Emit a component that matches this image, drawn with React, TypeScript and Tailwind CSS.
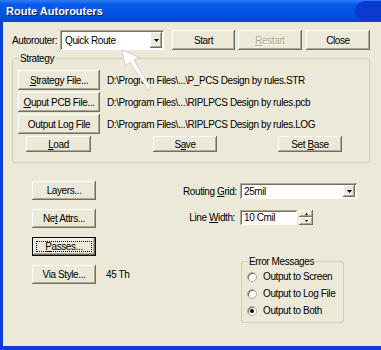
import { ReactNode } from "react";

// classic 3d button
const Btn = ({
  children,
  className = "",
  disabled = false,
  focused = false,
}: {
  children: ReactNode;
  className?: string;
  disabled?: boolean;
  focused?: boolean;
}) => (
  <div
    className={`flex items-center justify-center bg-[#ece9d8] ${
      focused
        ? "border border-black shadow-[inset_-1px_-1px_#716f64,inset_1px_1px_#fff,inset_-2px_-2px_#aca899]"
        : "shadow-[inset_-1px_-1px_#716f64,inset_1px_1px_#fff,inset_-2px_-2px_#aca899]"
    } ${disabled ? "text-[#aca899] [text-shadow:1px_1px_#fff]" : "text-black"} ${className}`}
  >
    {focused ? (
      <span className="flex items-center justify-center w-[calc(100%-6px)] h-[calc(100%-6px)] border border-dotted border-black">
        {children}
      </span>
    ) : (
      children
    )}
  </div>
);

const Sunken = ({ children, className = "" }: { children?: ReactNode; className?: string }) => (
  <div
    className={`flex items-center bg-white shadow-[inset_1px_1px_#aca899,inset_-1px_-1px_#fff,inset_2px_2px_#716f64] ${className}`}
  >
    {children}
  </div>
);

const Arrow = () => (
  <div className="w-[12px] h-[calc(100%-4px)] mr-[2px] flex items-center justify-center bg-[#ece9d8] shadow-[inset_-1px_-1px_#716f64,inset_1px_1px_#fff,inset_-2px_-2px_#aca899]">
    <svg width="5" height="3" viewBox="0 0 5 3">
      <path d="M0 0h5L2.5 3z" fill="#000" />
    </svg>
  </div>
);

const Radio = ({ label, checked = false }: { label: string; checked?: boolean }) => (
  <div className="flex items-center h-[17px]">
    <span className="w-[10px] h-[10px] rounded-full bg-white border border-[#aca899] shadow-[inset_1px_1px_#716f64] flex items-center justify-center">
      {checked && <span className="w-[4px] h-[4px] rounded-full bg-black" />}
    </span>
    <span className="ml-[6px]">{label}</span>
  </div>
);

const paths = [
  { btn: <><u>S</u>trategy File...</>, path: "D:\\Program Files\\...\\P_PCS Design by rules.STR" },
  { btn: <><u>O</u>uput PCB File...</>, path: "D:\\Program Files\\...\\RIPLPCS Design by rules.pcb" },
  { btn: <>Output Log File</>, path: "D:\\Program Files\\...\\RIPLPCS Design by rules.LOG" },
];

export default function App() {
  return (
    <div className="w-[381px] h-[350px] flex flex-col bg-[#0a3fd4] font-['Liberation_Sans',Arial,sans-serif] text-[10px] tracking-[-0.4px] text-black overflow-hidden">
      {/* title bar */}
      <div className="h-[22px] flex items-center bg-[linear-gradient(to_bottom,#2f7cf7,#0a5ce8_20%,#0054e3_60%,#0048d0)]">
        <span className="ml-[6px] text-white font-bold text-[11px] tracking-normal [text-shadow:1px_1px_#0a1d6e]">
          Route Autorouters
        </span>
        <div className="ml-auto w-[26px] h-[20px] rounded-l-[10px] bg-[#0a3ad0]" />
      </div>

      {/* body */}
      <div className="relative flex-1 ml-[3px] mb-[4px] bg-[#ece9d8] flex flex-col">
        {/* autorouter row */}
        <div className="flex items-center mt-[8px] ml-[9px] h-[20px]">
          <span className="w-[48px]">Autorouter:</span>
          <Sunken className="w-[104px] h-[20px] justify-between">
            <span className="ml-[5px]">Quick Route</span>
            <Arrow />
          </Sunken>
          <Btn className="ml-[8px] w-[63px] h-[20px]">Start</Btn>
          <Btn className="ml-[3px] w-[64px] h-[20px]" disabled>
            <span><u>R</u>estart</span>
          </Btn>
          <Btn className="ml-[4px] w-[64px] h-[20px]">Close</Btn>
        </div>

        {/* strategy group */}
        <fieldset className="mt-[3px] ml-[9px] w-[358px] border border-[#d0d0bf] rounded-[2px] px-[5px] pb-[10px] pt-[6px]">
          <legend className="ml-[1px] px-[1px] leading-[11px]">Strategy</legend>
          {paths.map((p, i) => (
            <div key={i} className="flex items-center h-[20px] mb-[2px]">
              <Btn className="w-[82px] h-[20px]">
                <span>{p.btn}</span>
              </Btn>
              <span className="ml-[7px] whitespace-nowrap">{p.path}</span>
            </div>
          ))}
          <div className="flex items-center">
            <Btn className="ml-[8px] w-[65px] h-[16px]">
              <span><u>L</u>oad</span>
            </Btn>
            <Btn className="ml-[62px] w-[64px] h-[16px]">
              <span>S<u>a</u>ve</span>
            </Btn>
            <Btn className="ml-[61px] w-[64px] h-[16px]">
              <span>Set <u>B</u>ase</span>
            </Btn>
          </div>
        </fieldset>

        {/* lower section */}
        <div className="flex">
          <div className="ml-[29px] w-[151px] mt-[18px] flex flex-col gap-[9px]">
            <Btn className="w-[64px] h-[19px]">Layers...</Btn>
            <Btn className="w-[64px] h-[19px]">
              <span>Ne<u>t</u> Attrs...</span>
            </Btn>
            <Btn className="w-[64px] h-[19px]" focused>
              <span><u>P</u>asses...</span>
            </Btn>
            <div className="flex items-center">
              <Btn className="w-[64px] h-[19px]">Via Style...</Btn>
              <span className="ml-[10px]">45 Th</span>
            </div>
          </div>

          <div className="mt-[20px] flex flex-col">
            <div className="flex items-center h-[16px]">
              <span className="w-[52px] text-right whitespace-nowrap">
                Routing <u>G</u>rid:
              </span>
              <Sunken className="ml-[5px] w-[117px] h-[16px] justify-between">
                <span className="ml-[4px]">25mil</span>
                <Arrow />
              </Sunken>
            </div>
            <div className="flex items-center h-[15px] mt-[11px]">
              <span className="w-[52px] text-right whitespace-nowrap">
                Line <u>W</u>idth:
              </span>
              <Sunken className="ml-[5px] w-[57px] h-[15px]">
                <span className="ml-[4px]">10 Cmil</span>
              </Sunken>
              <div className="ml-[2px] w-[14px] h-[15px] flex flex-col">
                <Btn className="h-[7px] w-full">
                  <svg width="3" height="2" viewBox="0 0 3 2">
                    <path d="M1.5 0L3 2H0z" fill="#000" />
                  </svg>
                </Btn>
                <Btn className="h-[8px] w-full">
                  <svg width="3" height="2" viewBox="0 0 3 2">
                    <path d="M0 0h3L1.5 2z" fill="#000" />
                  </svg>
                </Btn>
              </div>
            </div>

            <fieldset className="mt-[31px] ml-[58px] w-[103px] border border-[#d0d0bf] rounded-[2px] px-[5px] pb-[3px] pt-[1px]">
              <legend className="ml-[1px] px-[1px] leading-[11px]">Error Messages</legend>
              <Radio label="Output to Screen" />
              <Radio label="Output to Log File" />
              <Radio label="Output to Both" checked />
            </fieldset>
          </div>
        </div>

        {/* mouse cursor over the dialog */}
        <svg
          className="absolute left-[118px] top-[27px]"
          width="34"
          height="44"
          viewBox="0 0 34 44"
        >
          <path
            d="M1 1 L4 17 L9 13 L27 41 L30 39 L13 11 L19 9 Z"
            fill="#fff"
            stroke="#c8c8c0"
            strokeWidth="0.8"
          />
        </svg>
      </div>
    </div>
  );
}
